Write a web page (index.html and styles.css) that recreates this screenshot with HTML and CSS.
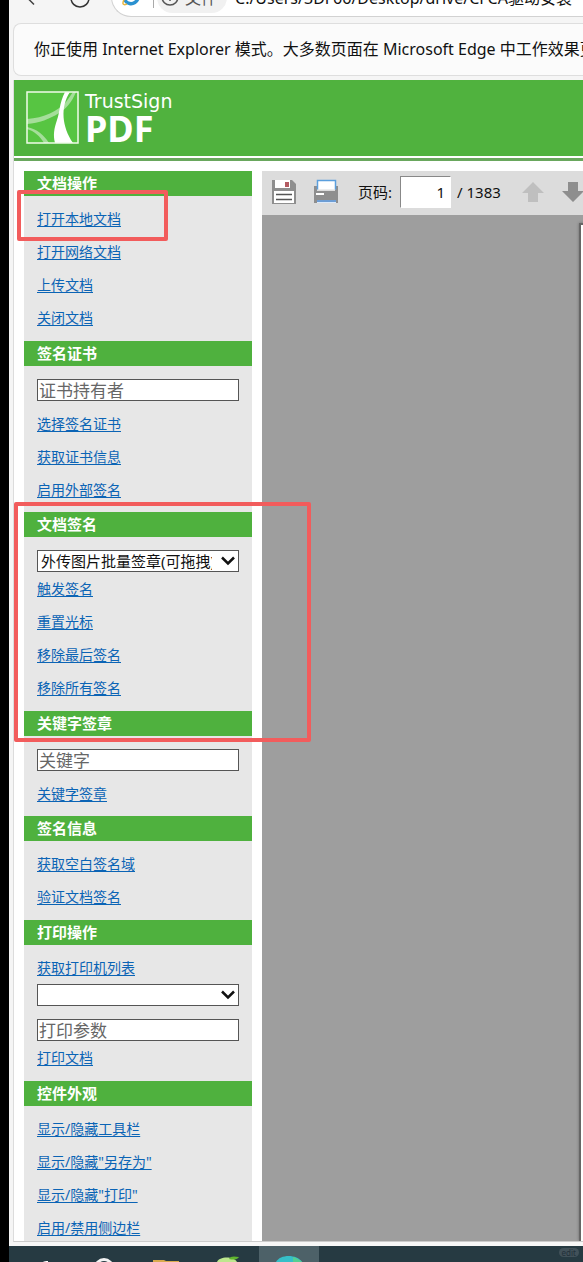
FILE: index.html
```
<!DOCTYPE html>
<html lang="zh-CN">
  <head>
    <meta charset="utf-8">
    <meta name="viewport" content="width=device-width, initial-scale=1.0">
    <title>TrustSign PDF</title>
    <link rel="stylesheet" href="styles.css">
  </head>
  <body>
    <div class="browserBar">
      <button class="navBtn" type="button" aria-label="返回">
        <svg width="16" height="16" viewBox="0 0 16 16" fill="none" stroke="#444" stroke-width="1.5"><path d="M10 0L4 7.500l7 7"/></svg>
      </button>
      <button class="navBtn" type="button" aria-label="刷新">
        <svg width="22" height="22" viewBox="0 0 22 22" fill="none" stroke="#333" stroke-width="1.500"><circle cx="11" cy="11" r="9"/></svg>
      </button>
      <div class="addressBar">
        <svg width="18" height="18" viewBox="0 0 18 18" fill="none"><path d="M2 7a7 7 0 0 0 14 3" stroke="#2a91d0" stroke-width="3.500"/><path d="M3 8h13" stroke="#2a91d0" stroke-width="3"/><path d="M3 10c-3 5-3 8 2 6" stroke="#e8b640" stroke-width="1.500"/></svg>
        <span class="divider"></span>
        <span class="fileTag">
          <svg width="18" height="18" viewBox="0 0 18 18" fill="none" stroke="#555" stroke-width="1.500"><circle cx="9" cy="9" r="8"/><path d="M9 8v5M9 4v2"/></svg>
          文件
        </span>
        <span class="address">C:/Users/3DF66/Desktop/drive/CFCA驱动安装</span>
      </div>
    </div>
    <div class="ieNotice">你正使用 Internet Explorer 模式。大多数页面在 Microsoft Edge 中工作效果更好。</div>

    <div class="page">
      <header class="header">
        <svg class="logo" width="53" height="53" viewBox="0 0 53 53">
          <rect x="1" y="1" width="51" height="51" fill="#57c542"/>
          <path d="M1 28c17-1 31-8 39-17l7-10h3c-4 10-10 17-17 21-9 6-20 10-32 11z" fill="#a5de9a"/>
          <path d="M1 36c10 2 17 8 22 16h-5c-4-7-10-12-17-14z" fill="#a5de9a"/>
          <path d="M39 1h5c-10 15-8 35 3 51H29c-2-8-1-14 2-23 3-8 2-16 8-28z" fill="#fff"/>
          <rect x="1" y="1" width="51" height="51" fill="none" stroke="#effbe9" stroke-width="1.500"/>
        </svg>
        <div class="logoText">
          <span class="logoName">TrustSign</span>
          <span class="logoPdf">PDF</span>
        </div>
      </header>

      <main class="main">
        <nav class="sidebar">
          <section class="group">
            <h2>文档操作</h2>
            <div class="mark markOpen"></div>
            <div class="links">
              <a href="#">打开本地文档</a>
              <a href="#">打开网络文档</a>
              <a href="#">上传文档</a>
              <a href="#">关闭文档</a>
            </div>
          </section>
          <section class="group">
            <h2>签名证书</h2>
            <div class="field"><input type="text" placeholder="证书持有者" aria-label="证书持有者"></div>
            <div class="links">
              <a href="#">选择签名证书</a>
              <a href="#">获取证书信息</a>
              <a href="#">启用外部签名</a>
            </div>
          </section>
          <section class="group">
            <h2>文档签名</h2>
            <div class="mark markSign"></div>
            <div class="field">
              <select aria-label="签名方式"><option>外传图片批量签章(可拖拽)</option></select>
              <svg class="chevron" width="14" height="10" viewBox="0 0 14 10" fill="none" stroke="#111" stroke-width="2.500"><path d="M1 1.500l6 6 6-6"/></svg>
            </div>
            <div class="links close">
              <a href="#">触发签名</a>
              <a href="#">重置光标</a>
              <a href="#">移除最后签名</a>
              <a href="#">移除所有签名</a>
            </div>
          </section>
          <section class="group">
            <h2>关键字签章</h2>
            <div class="field"><input type="text" placeholder="关键字" aria-label="关键字"></div>
            <div class="links">
              <a href="#">关键字签章</a>
            </div>
          </section>
          <section class="group">
            <h2>签名信息</h2>
            <div class="links">
              <a href="#">获取空白签名域</a>
              <a href="#">验证文档签名</a>
            </div>
          </section>
          <section class="group">
            <h2>打印操作</h2>
            <div class="links printers">
              <a href="#">获取打印机列表</a>
            </div>
            <div class="field joined">
              <select aria-label="打印机列表"><option></option></select>
              <svg class="chevron" width="14" height="10" viewBox="0 0 14 10" fill="none" stroke="#111" stroke-width="2.500"><path d="M1 1.500l6 6 6-6"/></svg>
            </div>
            <div class="field"><input type="text" placeholder="打印参数" aria-label="打印参数"></div>
            <div class="links close">
              <a href="#">打印文档</a>
            </div>
          </section>
          <section class="group">
            <h2>控件外观</h2>
            <div class="links">
              <a href="#">显示/隐藏工具栏</a>
              <a href="#">显示/隐藏"另存为"</a>
              <a href="#">显示/隐藏"打印"</a>
              <a href="#">启用/禁用侧边栏</a>
            </div>
          </section>
        </nav>

        <div class="viewer">
          <div class="tools">
            <button class="toolBtn" type="button" aria-label="保存">
              <svg width="26" height="26" viewBox="0 0 26 26">
                <path d="M1 1h20l4 4v20H1z" fill="#8e8e8e"/>
                <path d="M4 1h15v8H4z" fill="#fff"/>
                <path d="M14 3h4v5h-4z" fill="#b35a61"/>
                <path d="M3 12h20v12H3z" fill="#fff"/>
                <path d="M5 15.500h16M5 20.500h16" stroke="#555" stroke-width="1.500"/>
              </svg>
            </button>
            <button class="toolBtn" type="button" aria-label="打印">
              <svg width="26" height="26" viewBox="0 0 26 26">
                <path d="M1 7h3v5h18V7h3v17H1z" fill="#8e8e8e"/>
                <path d="M4.500 1.500h18v9h-18z" fill="#fff"/>
                <path d="M4.500 10.500v-9h18v9" fill="none" stroke="#5b9fdd" stroke-width="1.500"/>
                <path d="M3 14h8v2H3z" fill="#fff"/>
                <path d="M4 21h19v3H4z" fill="#dbe9fa"/>
                <path d="M4 22h19" stroke="#6d9dd4" stroke-width="2"/>
              </svg>
            </button>
            <label class="pageLabel" for="pageNo">页码:</label>
            <input class="pageNo" id="pageNo" type="text" value="1">
            <span class="pageTotal">/ 1383</span>
            <button class="toolBtn prev" type="button" aria-label="上一页">
              <svg width="24" height="22" viewBox="0 0 24 22"><path d="M12 1l11 11h-6v9H7v-9H1z" fill="#bfbfbf"/></svg>
            </button>
            <button class="toolBtn next" type="button" aria-label="下一页">
              <svg width="24" height="22" viewBox="0 0 24 22"><path d="M12 21L1 10h6V1h10v9h6z" fill="#8e8e8e"/></svg>
            </button>
          </div>
          <div class="canvas">
            <div class="sheet"></div>
          </div>
        </div>
      </main>
    </div>

    <footer class="taskbar">
      <span class="task"><svg width="20" height="16" viewBox="0 0 20 16"><path d="M12 16c1-1 3-1 5-1v1z" fill="#fff"/></svg></span>
      <span class="task"><svg width="24" height="16" viewBox="0 0 24 16"><circle cx="12" cy="22" r="8.500" fill="none" stroke="#f2f2f2" stroke-width="3"/></svg></span>
      <span class="task"><svg width="28" height="16" viewBox="0 0 28 16"><path d="M1 14h11l2 1h13v1H1z" fill="#d9aa4d"/></svg></span>
      <span class="task"><svg width="28" height="16" viewBox="0 0 28 16"><path d="M3 16c2-6 17-6 20 0z" fill="#bde78e"/><path d="M15 13c1-3 5-3 10-2-2 3-6 3-10 2z" fill="#60b52e"/></svg></span>
      <span class="task active"><svg width="28" height="16" viewBox="0 0 28 16"><path d="M1 16c4-8 21-8 26 0z" fill="#36bfc8"/><path d="M18 11c4 1 7 3 9 5h-9z" fill="#55cf92"/></svg></span>
      <span class="imeBadge">edit</span>
    </footer>
  </body>
</html>
```
FILE: styles.css
```
* {
  box-sizing: border-box;
}
html {
  background-color: #000;
}
body {
  display: flex;
  flex-direction: column;
  height: 100vh;
  margin: 0 0 0 9px;
  background-color: #f5f5f5;
  color: #111;
  font-family: 'Noto Sans', 'Noto Sans CJK SC', sans-serif;
  font-size: 14px;
  overflow: hidden;
}
h2 {
  margin: 0;
}
button {
  flex: none;
  padding: 0;
  border: 0;
  background: none;
  cursor: pointer;
}
svg {
  display: block;
  flex: none;
}

/* browser */
.browserBar {
  display: flex;
  flex: none;
  align-items: flex-end;
  gap: 30px;
  height: 17px;
  padding-left: 14px;
}
.navBtn {
  padding-bottom: 8px;
}
.navBtn:first-child {
  padding-bottom: 11px;
}
.addressBar {
  display: flex;
  flex: 1;
  align-items: center;
  min-width: 0;
  height: 40px;
  margin-left: -10px;
  padding-left: 10px;
  border: 1px solid #d2d2d2;
  border-right: 0;
  border-radius: 20px 0 0 20px;
  background-color: #fff;
  overflow: hidden;
  white-space: nowrap;
  font-size: 16px;
}
.divider {
  width: 1px;
  height: 22px;
  margin: 0 3px 0 13px;
  background-color: #aaa;
}
.fileTag {
  display: flex;
  flex: none;
  align-items: center;
  gap: 6px;
  height: 31px;
  padding: 0 10px 0 4px;
  border-radius: 16px;
  background-color: #f1f1f1;
  color: #555;
}
.address {
  padding-left: 8px;
}
.ieNotice {
  flex: none;
  margin: 6px 0 4px 4px;
  padding-left: 20px;
  border: 1px solid #dedede;
  border-right: 0;
  border-radius: 8px 0 0 8px;
  background-color: #fbfbfb;
  font-size: 16px;
  line-height: 51px;
  white-space: nowrap;
  overflow: hidden;
}

/* page */
.page {
  display: flex;
  flex: 1;
  flex-direction: column;
  min-height: 0;
  margin-left: 4px;
  border-left: 1px solid #dcdcdc;
  border-bottom: 1px solid #ccc;
  background-color: #fff;
  overflow: hidden;
}
.header {
  display: flex;
  flex: none;
  gap: 6px;
  height: 76px;
  padding: 11px 12px;
  background-color: #50b23e;
  color: #fff;
}
.logoText {
  display: flex;
  flex-direction: column;
}
.logoName {
  font-family: 'DejaVu Sans', sans-serif;
  font-size: 19px;
  line-height: 20px;
}
.logoPdf {
  font-size: 36px;
  font-weight: bold;
  line-height: 36px;
}
.main {
  display: flex;
  flex: 1;
  gap: 10px;
  min-height: 0;
  margin-top: 2px;
  padding-top: 10px;
  border-top: 3px solid #69a75d;
}

/* sidebar */
.sidebar {
  flex: none;
  width: 238px;
  padding-left: 10px;
}
.group {
  position: relative;
  background-color: #e7e7e7;
}
.group h2 {
  padding-left: 13px;
  background-color: #4fb13e;
  color: #fff;
  font-size: 15px;
  line-height: 25px;
}
.links {
  display: flex;
  flex-direction: column;
  align-items: flex-start;
  padding: 6px 13px 7px;
}
.links a {
  color: #0b64b5;
  font-size: 14px;
  line-height: 33px;
  text-underline-offset: 2px;
}
.field + .links {
  padding-bottom: 6px;
}
.field + .links.close {
  padding: 0 13px 7px;
}
.links.printers {
  padding-bottom: 0;
}
.field {
  position: relative;
  padding: 13px 13px 0;
}
.field.joined {
  padding-top: 0;
}
.field input,
.field select {
  display: block;
  width: 100%;
  height: 22px;
  margin: 0;
  padding: 0 1px;
  border: 1px solid #555;
  border-radius: 0;
  background-color: #fff;
  color: #111;
  font-family: inherit;
  font-size: 17px;
  line-height: 20px;
}
.field select {
  appearance: none;
  padding: 0 26px 0 3px;
  font-size: 15px;
}
.field input::placeholder {
  color: #666;
}
.chevron {
  position: absolute;
  right: 17px;
  bottom: 6px;
  pointer-events: none;
}
.mark {
  position: absolute;
  z-index: 2;
  border: 4px solid #f25c5c;
  border-radius: 2px;
  pointer-events: none;
}
.markOpen {
  top: 19px;
  left: -7px;
  width: 151px;
  height: 51px;
}
.markSign {
  top: -10px;
  left: -10px;
  width: 297px;
  height: 240px;
}

/* viewer */
.viewer {
  display: flex;
  flex: 1;
  flex-direction: column;
  min-width: 0;
  background-color: #9e9e9e;
  overflow: hidden;
}
.tools {
  display: flex;
  flex: none;
  align-items: center;
  height: 44px;
  padding: 0 0 3px 9px;
  background-color: #dcdcdc;
  white-space: nowrap;
}
.toolBtn + .toolBtn {
  margin-left: 16px;
}
.pageLabel {
  margin-left: 19px;
  font-size: 15px;
}
.pageNo {
  flex: none;
  width: 51px;
  height: 32px;
  margin: 0 6px 0 8px;
  padding: 0 5px;
  border: 1px solid #fff;
  border-top-color: #888;
  border-left-color: #888;
  background-color: #fff;
  color: #111;
  font-family: inherit;
  font-size: 15px;
  text-align: right;
}
.pageTotal {
  font-size: 15px;
}
.toolBtn.prev {
  margin-left: 20px;
}
.canvas {
  display: flex;
  flex: 1;
  justify-content: flex-end;
  padding-top: 8px;
}
.sheet {
  width: 4px;
  border: 2px solid #666;
  border-width: 2px 0 0 2px;
  background-color: #fff;
  box-shadow: 0 0 3px #666;
}

/* taskbar */
.taskbar {
  display: flex;
  flex: none;
  height: 20px;
  padding-right: 4px;
  border-top: 4px solid #f7f7f7;
  background-color: #263a42;
  overflow: hidden;
}
.task {
  display: flex;
  justify-content: center;
  width: 62px;
}
.task:first-child {
  width: 64px;
}
.task.active {
  width: 60px;
  background-color: #4d6168;
}
.imeBadge {
  align-self: flex-start;
  margin: 2px 0 0 auto;
  padding: 0 3px;
  border-radius: 5px;
  background-color: #415159;
  color: #223039;
  font-size: 8px;
  line-height: 9px;
}
```
